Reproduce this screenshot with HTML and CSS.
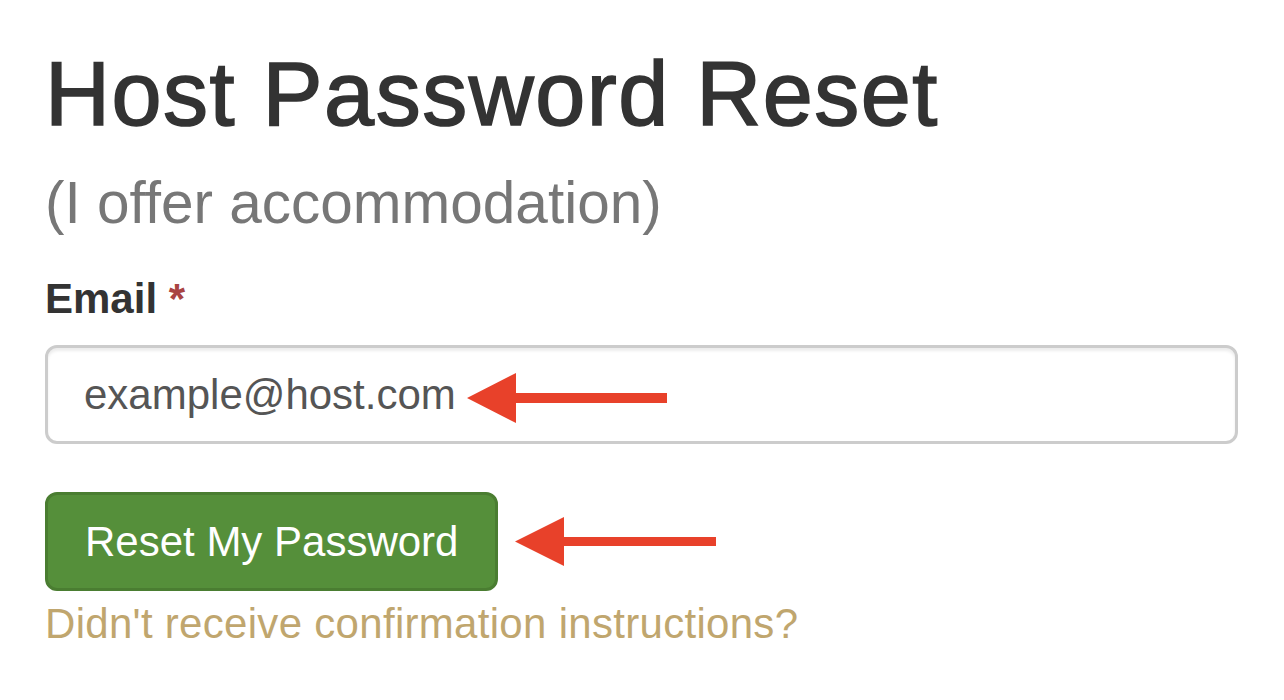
FILE: index.html
```html
<!DOCTYPE html>
<html lang="en">
<head>
<meta charset="utf-8">
<title>Host Password Reset</title>
<link rel="stylesheet" href="styles.css">
</head>
<body>
<main class="page">
  <h1 class="title">Host Password Reset</h1>
  <p class="subtitle">(I offer accommodation)</p>
  <form class="form">
    <label class="label" for="email">Email <abbr class="req" title="required">*</abbr></label>
    <div class="field">
      <input class="input" id="email" type="email" value="example@host.com">
      <svg class="arrow arrow-input" width="200" height="50" viewBox="0 0 200 50" aria-hidden="true">
        <polygon points="0,25 49,0 49,20 200,20 200,30 49,30 49,50" fill="#e8412a"/>
      </svg>
    </div>
    <div class="actions">
      <button class="btn" type="button">Reset My Password</button>
      <svg class="arrow" width="201" height="49" viewBox="0 0 201 49" aria-hidden="true">
        <polygon points="0,24.5 49,0 49,20 201,20 201,29 49,29 49,49" fill="#e8412a"/>
      </svg>
    </div>
    <a class="link" href="#">Didn't receive confirmation instructions?</a>
  </form>
</main>
</body>
</html>
```

FILE: styles.css
```css
html, body {
  margin: 0;
  padding: 0;
  background: #ffffff;
}

body {
  font-family: "Liberation Sans", Arial, Helvetica, sans-serif;
  color: #333333;
}

.page {
  padding: 45px 46px 0 45px;
}

.title {
  margin: 0;
  font-size: 90px;
  line-height: 99px;
  font-weight: 500;
  color: #333333;
  letter-spacing: 1.5px;
  -webkit-text-stroke: 1.6px #333333;
}

.subtitle {
  margin: 27px 0 0 0;
  font-size: 58.5px;
  line-height: 64px;
  color: #777777;
}

.form {
  display: flex;
  flex-direction: column;
  align-items: flex-start;
}

.label {
  margin-top: 34px;
  font-size: 42px;
  line-height: 60px;
  font-weight: bold;
  color: #333333;
}

.req {
  color: #a94442;
  text-decoration: none;
  border: none;
}

.field {
  position: relative;
  align-self: stretch;
  margin-top: 16px;
}

.input {
  display: block;
  box-sizing: border-box;
  width: 100%;
  height: 99px;
  margin: 0;
  padding: 0 35px 0 36px;
  border: 3px solid #cccccc;
  border-radius: 12px;
  box-shadow: inset 0 3px 3px rgba(0, 0, 0, 0.075);
  font-family: "Liberation Sans", Arial, Helvetica, sans-serif;
  font-size: 42px;
  color: #555555;
  background: #ffffff;
  outline: none;
}

.arrow {
  display: block;
  flex: none;
}

.arrow-input {
  position: absolute;
  left: 422px;
  top: 28px;
}

.actions {
  display: flex;
  align-items: center;
  gap: 17px;
  margin-top: 48px;
}

.btn {
  box-sizing: border-box;
  height: 99px;
  padding: 0 37px;
  border: 3px solid #4a7d31;
  border-radius: 12px;
  background: #558f3a;
  color: #ffffff;
  font-family: "Liberation Sans", Arial, Helvetica, sans-serif;
  font-size: 42px;
  line-height: 60px;
  cursor: pointer;
}

.link {
  margin-top: 3px;
  font-size: 42px;
  line-height: 60px;
  letter-spacing: 0.3px;
  color: #c0a66e;
  text-decoration: none;
}
```
